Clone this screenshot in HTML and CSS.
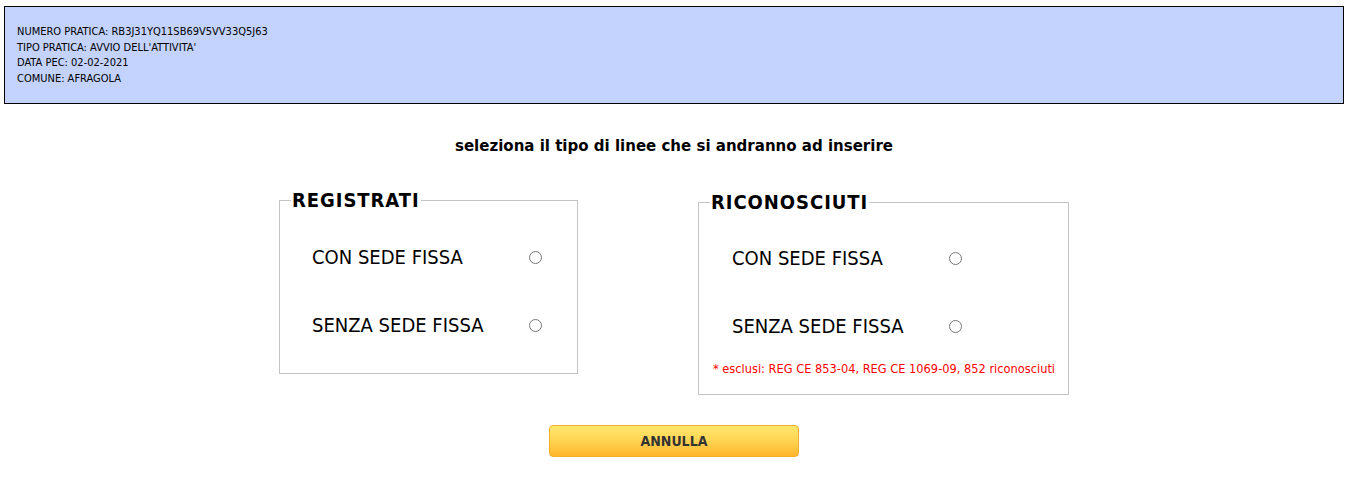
FILE: index.html
```html
<!DOCTYPE html>
<html lang="it">
<head>
<meta charset="utf-8">
<title>Selezione linee</title>
<link rel="stylesheet" href="styles.css">
</head>
<body>
<div class="page">
  <div class="info">
    <div>NUMERO PRATICA: RB3J31YQ11SB69V5VV33Q5J63</div>
    <div>TIPO PRATICA: AVVIO DELL'ATTIVITA'</div>
    <div>DATA PEC: 02-02-2021</div>
    <div>COMUNE: AFRAGOLA</div>
  </div>

  <h2 class="title">seleziona il tipo di linee che si andranno ad inserire</h2>

  <div class="groups">
    <fieldset class="group group-reg">
      <legend>REGISTRATI</legend>
      <div class="opts">
        <label class="opt"><span class="opt-label">CON SEDE FISSA</span><input type="radio" name="tipo" value="reg-fissa"></label>
        <label class="opt"><span class="opt-label">SENZA SEDE FISSA</span><input type="radio" name="tipo" value="reg-senza"></label>
      </div>
    </fieldset>

    <fieldset class="group group-ric">
      <legend>RICONOSCIUTI</legend>
      <div class="opts">
        <label class="opt"><span class="opt-label">CON SEDE FISSA</span><input type="radio" name="tipo" value="ric-fissa"></label>
        <label class="opt"><span class="opt-label">SENZA SEDE FISSA</span><input type="radio" name="tipo" value="ric-senza"></label>
      </div>
      <p class="note">* esclusi: REG CE 853-04, REG CE 1069-09, 852 riconosciuti</p>
    </fieldset>
  </div>

  <div class="actions">
    <button type="button" class="btn">ANNULLA</button>
  </div>
</div>
</body>
</html>
```

FILE: styles.css
```css
html, body {
  margin: 0;
  padding: 0;
  background: #ffffff;
}

body {
  font-family: "DejaVu Sans", Verdana, sans-serif;
  font-stretch: condensed;
  color: #000000;
}

.page {
  width: 1348px;
  padding-top: 6px;
}

.info {
  box-sizing: border-box;
  width: 1340px;
  height: 98px;
  margin-left: 4px;
  padding: 17px 12px 0 12px;
  background: #c3d3fd;
  border: 1px solid #000000;
  font-size: 11px;
  line-height: 15.7px;
}

.title {
  margin: 31px 0 0 0;
  text-align: center;
  font-size: 16.7px;
  line-height: 20px;
  font-weight: bold;
}

.groups {
  display: flex;
  justify-content: center;
  align-items: flex-start;
  gap: 120px;
  margin-top: 33px;
}

.group {
  box-sizing: border-box;
  margin: 0;
  padding: 0 0 14px 0;
  border: 1px solid #c4c4c4;
  min-width: 0;
}

.group-reg {
  width: 299px;
}

.group-ric {
  width: 371px;
  margin-top: 2px;
  padding-bottom: 17px;
}

.group legend {
  margin-left: 11px;
  padding: 0 1px;
  font-size: 20px;
  line-height: 24px;
  font-weight: bold;
  letter-spacing: 0.95px;
}

.opts {
  padding-top: 11px;
}

.opt {
  display: flex;
  align-items: center;
  height: 68px;
  padding-left: 32px;
}

.group-ric .opt {
  padding-left: 33px;
}

.group-ric .opts {
  padding-top: 10px;
}

.opt-label {
  width: 216px;
  font-size: 20px;
}

.opt input {
  margin: 0 0 0 1px;
  width: 13px;
  height: 13px;
}

.note {
  margin: 1px 0 0 0;
  padding-left: 14px;
  font-size: 12.7px;
  line-height: 16px;
  color: #ff0000;
}

.actions {
  display: flex;
  justify-content: center;
  margin-top: 30px;
}

.btn {
  box-sizing: border-box;
  width: 250px;
  height: 32px;
  border: 1px solid #f2b02a;
  border-radius: 4px;
  background: linear-gradient(to bottom, #ffe76d 0%, #ffd452 50%, #ffb52c 100%);
  font-family: "DejaVu Sans", Verdana, sans-serif;
  font-stretch: condensed;
  font-size: 14px;
  font-weight: bold;
  color: #333333;
  padding: 0;
}
```
